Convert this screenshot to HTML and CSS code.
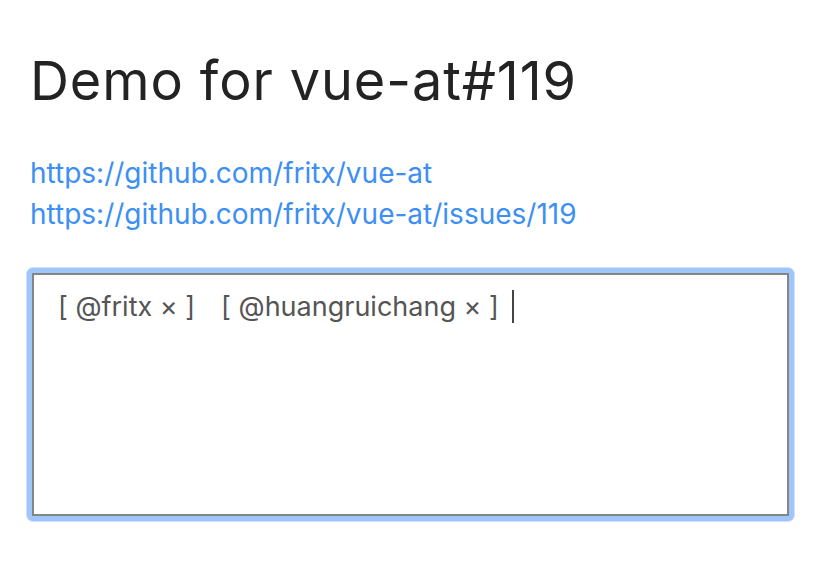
FILE: index.html
```html
<!DOCTYPE html>
<html>
<head>
<meta charset="utf-8">
<link rel="stylesheet" href="styles.css">
</head>
<body>
<div class="page">
  <h1 class="title">Demo for vue-at#119</h1>
  <div class="links">
    <a class="link" href="#">https://github.com/fritx/vue-at</a>
    <a class="link" href="#">https://github.com/fritx/vue-at/issues/119</a>
  </div>
  <div class="ring">
    <div class="editor">
      <span class="tag">[ @fritx × ]</span><span class="tag">[ @huangruichang × ]</span><span class="caret"></span>
    </div>
  </div>
</div>
</body>
</html>
```

FILE: styles.css
```css
html, body {
  margin: 0;
  padding: 0;
  background: #ffffff;
}

.page {
  padding: 49px 23px 0 26px;
  font-family: Inter, "Liberation Sans", sans-serif;
}

.title {
  margin: 0;
  padding-left: 4px;
  font-size: 54px;
  line-height: 64px;
  letter-spacing: 0.9px;
  font-weight: 400;
  color: #232323;
}

.links {
  margin-top: 40px;
  padding-left: 4px;
  display: flex;
  flex-direction: column;
  align-items: flex-start;
}

.link {
  font-size: 28px;
  line-height: 41px;
  color: #3d8ff3;
  text-decoration: none;
}

.ring {
  margin-top: 32px;
  width: 769px;
  box-sizing: border-box;
  padding: 5px;
  border: 1px solid #cfe2fd;
  border-radius: 7px;
  background: #a0c5fa;
}

.editor {
  height: 243px;
  box-sizing: border-box;
  border: 2px solid #858585;
  background: #ffffff;
  padding: 14px 24px;
  font-size: 27px;
  line-height: 36px;
  color: #555555;
  display: flex;
  align-items: flex-start;
}

.tag {
  margin-right: 26px;
  white-space: pre;
}

.caret {
  display: inline-block;
  width: 2px;
  height: 33px;
  margin-top: 1px;
  margin-left: -13px;
  background: #444444;
}
```
